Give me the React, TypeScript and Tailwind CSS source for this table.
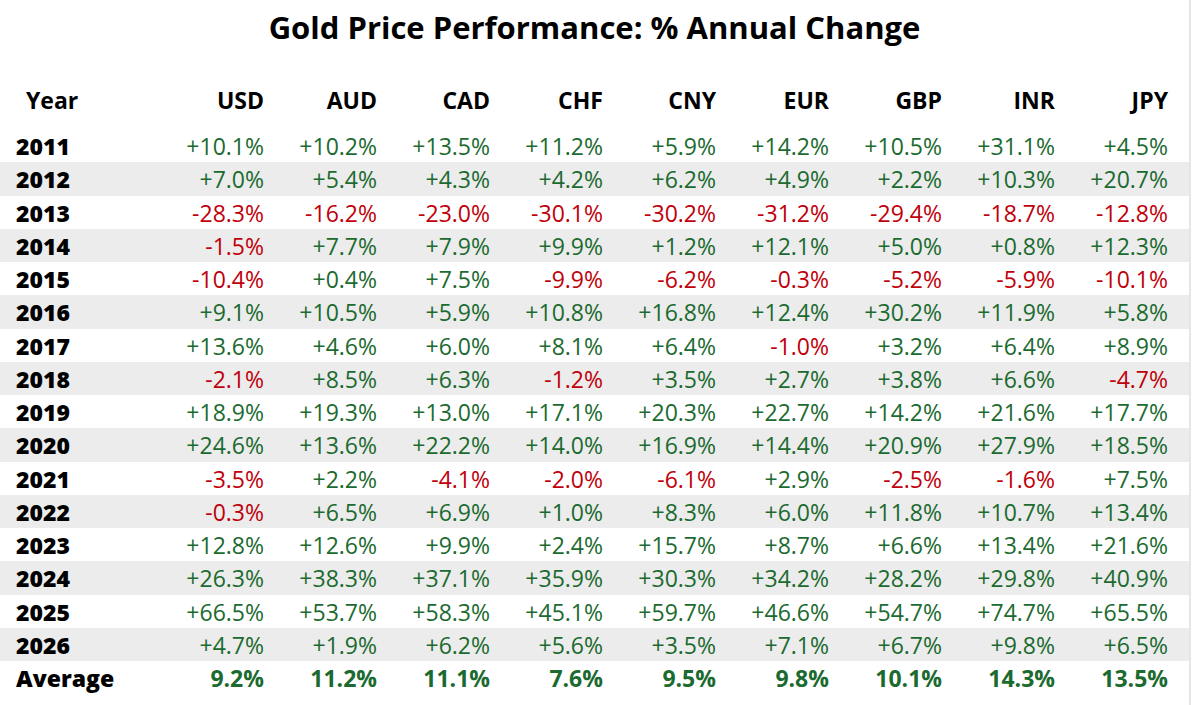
const currencies = ['USD', 'AUD', 'CAD', 'CHF', 'CNY', 'EUR', 'GBP', 'INR', 'JPY'];

const rows: [string, string[]][] = [
  ['2011', ['+10.1%', '+10.2%', '+13.5%', '+11.2%', '+5.9%', '+14.2%', '+10.5%', '+31.1%', '+4.5%']],
  ['2012', ['+7.0%', '+5.4%', '+4.3%', '+4.2%', '+6.2%', '+4.9%', '+2.2%', '+10.3%', '+20.7%']],
  ['2013', ['-28.3%', '-16.2%', '-23.0%', '-30.1%', '-30.2%', '-31.2%', '-29.4%', '-18.7%', '-12.8%']],
  ['2014', ['-1.5%', '+7.7%', '+7.9%', '+9.9%', '+1.2%', '+12.1%', '+5.0%', '+0.8%', '+12.3%']],
  ['2015', ['-10.4%', '+0.4%', '+7.5%', '-9.9%', '-6.2%', '-0.3%', '-5.2%', '-5.9%', '-10.1%']],
  ['2016', ['+9.1%', '+10.5%', '+5.9%', '+10.8%', '+16.8%', '+12.4%', '+30.2%', '+11.9%', '+5.8%']],
  ['2017', ['+13.6%', '+4.6%', '+6.0%', '+8.1%', '+6.4%', '-1.0%', '+3.2%', '+6.4%', '+8.9%']],
  ['2018', ['-2.1%', '+8.5%', '+6.3%', '-1.2%', '+3.5%', '+2.7%', '+3.8%', '+6.6%', '-4.7%']],
  ['2019', ['+18.9%', '+19.3%', '+13.0%', '+17.1%', '+20.3%', '+22.7%', '+14.2%', '+21.6%', '+17.7%']],
  ['2020', ['+24.6%', '+13.6%', '+22.2%', '+14.0%', '+16.9%', '+14.4%', '+20.9%', '+27.9%', '+18.5%']],
  ['2021', ['-3.5%', '+2.2%', '-4.1%', '-2.0%', '-6.1%', '+2.9%', '-2.5%', '-1.6%', '+7.5%']],
  ['2022', ['-0.3%', '+6.5%', '+6.9%', '+1.0%', '+8.3%', '+6.0%', '+11.8%', '+10.7%', '+13.4%']],
  ['2023', ['+12.8%', '+12.6%', '+9.9%', '+2.4%', '+15.7%', '+8.7%', '+6.6%', '+13.4%', '+21.6%']],
  ['2024', ['+26.3%', '+38.3%', '+37.1%', '+35.9%', '+30.3%', '+34.2%', '+28.2%', '+29.8%', '+40.9%']],
  ['2025', ['+66.5%', '+53.7%', '+58.3%', '+45.1%', '+59.7%', '+46.6%', '+54.7%', '+74.7%', '+65.5%']],
  ['2026', ['+4.7%', '+1.9%', '+6.2%', '+5.6%', '+3.5%', '+7.1%', '+6.7%', '+9.8%', '+6.5%']],
];

const averages = ['9.2%', '11.2%', '11.1%', '7.6%', '9.5%', '9.8%', '10.1%', '14.3%', '13.5%'];

const grid = 'grid grid-cols-[171px_repeat(9,113px)]';

export default function App() {
  return (
    <div className="w-[1200px] h-[705px] bg-white flex font-['Open_Sans',sans-serif] overflow-hidden">
      <div className="w-[1189px] flex flex-col">
        <div className="h-[54px] pt-[1px] flex items-center justify-center">
          <h1 className="text-[31px] font-bold text-black">Gold Price Performance: % Annual Change</h1>
        </div>

        <div className={`${grid} mt-[29px] mb-[13px] h-[33px] items-center text-[23px] font-bold text-black`}>
          <div className="pl-[26px]">Year</div>
          {currencies.map((c) => (
            <div key={c} className="text-right pr-[20px]">{c}</div>
          ))}
        </div>

        {rows.map(([year, vals], i) => (
          <div
            key={year}
            className={`${grid} h-[33.25px] items-center text-[23px] ${i % 2 === 1 ? 'bg-[#ececec]' : 'bg-white'}`}
          >
            <div className="pl-[16px] font-extrabold text-black">{year}</div>
            {vals.map((v, j) => (
              <div
                key={j}
                className={`text-right pr-[20px] ${v.startsWith('-') ? 'text-[#c0000b]' : 'text-[#1b6a2f]'}`}
              >
                {v}
              </div>
            ))}
          </div>
        ))}

        <div className={`${grid} h-[33.25px] items-center text-[23px] font-bold`}>
          <div className="pl-[16px] font-extrabold text-black">Average</div>
          {averages.map((v, j) => (
            <div key={j} className="text-right pr-[20px] text-[#1b6a2f]">{v}</div>
          ))}
        </div>
      </div>
      <div className="w-[2px] bg-[#e6e6e6]" />
    </div>
  );
}
